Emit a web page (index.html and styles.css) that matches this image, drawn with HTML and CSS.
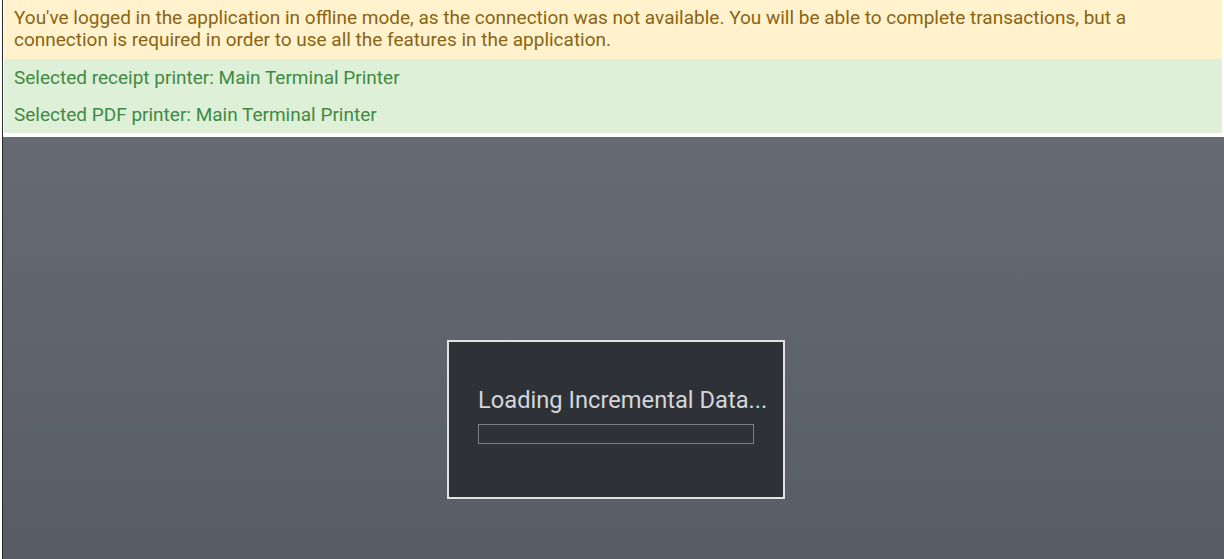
FILE: index.html
```html
<!DOCTYPE html>
<html lang="en">
<head>
    <meta charset="UTF-8">
    <meta name="viewport" content="width=device-width, initial-scale=1.0">
    <title>Point of Sale</title>
    <link rel="stylesheet" href="styles.css">
</head>
<body>
    <div class="app">
        <div class="messages">
            <div class="alert alert-warning">
                You've logged in the application in offline mode, as the connection was not available. You will be able to complete transactions, but a connection is required in order to use all the features in the application.
            </div>
            <div class="alert alert-success">Selected receipt printer: Main Terminal Printer</div>
            <div class="alert alert-success">Selected PDF printer: Main Terminal Printer</div>
        </div>

        <div class="loading-overlay">
            <div class="loading-dialog">
                <div class="loading-text">Loading Incremental Data...</div>
                <div class="progress"><div class="progress-bar" style="width: 0%"></div></div>
            </div>
        </div>
    </div>
</body>
</html>
```

FILE: styles.css
```css
html, body {
    height: 100%;
}
body {
    margin: 0;
    padding-left: 2px;
    font-family: Roboto, "Liberation Sans", sans-serif;
    background: #ffffff;
    overflow: hidden;
}
.app {
    height: 100%;
    border-left: 1px solid #2a2a2a;
    display: flex;
    flex-direction: column;
}
.messages {
    margin-left: 1px;
    margin-right: 2px;
    padding-bottom: 4px;
}
.alert {
    font-size: 19px;
    line-height: 22px;
    padding: 8px 10px 7px;
}
.alert-warning {
    background-color: #fff2cc;
    color: #8a6414;
    padding-top: 7px;
    padding-bottom: 8px;
}
.alert-success {
    background-color: #dff0d8;
    color: #3f8a43;
}
.loading-overlay {
    flex: 1;
    background: linear-gradient(to bottom, #666b73, #575d64);
    padding-top: 203px;
}
.loading-dialog {
    margin-left: 444px;
    width: 338px;
    height: 159px;
    box-sizing: border-box;
    padding: 44px 29px 0;
    background: #2e3135;
    border: 2px solid #e2e2e2;
}
.loading-text {
    color: #d2d6dc;
    font-size: 23.7px;
    line-height: 28px;
    white-space: nowrap;
}
.progress {
    margin-top: 10px;
    height: 20px;
    border: 1px solid #808080;
    box-sizing: border-box;
}
.progress-bar {
    height: 100%;
    background: #5b9bd5;
}
```
